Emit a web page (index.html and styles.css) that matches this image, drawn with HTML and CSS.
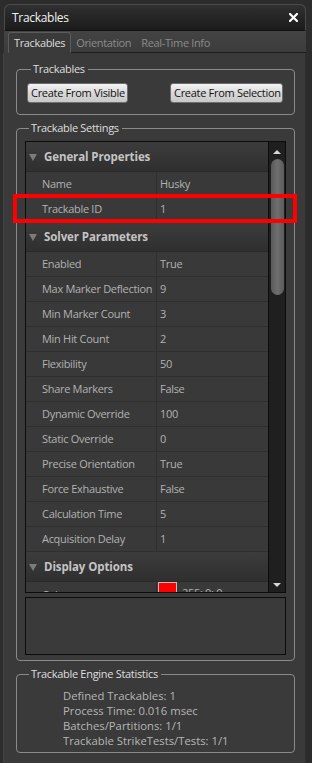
FILE: index.html
```html
<!DOCTYPE html>
<html>
<head>
<meta charset="utf-8">
<link rel="stylesheet" href="styles.css">
</head>
<body>
<div class="window">
  <div class="titlebar">
    <span class="title">Trackables</span>
    <svg class="close" width="9" height="9" viewBox="0 0 9 9"><path d="M1 1L8 8M8 1L1 8" stroke="#fff" stroke-width="2.2" stroke-linecap="square"/></svg>
  </div>
  <div class="tabs">
    <div class="tab active">Trackables</div>
    <div class="tab">Orientation</div>
    <div class="tab">Real-Time Info</div>
    <div class="tabfill"></div>
  </div>
  <div class="content">
    <fieldset class="group g-track">
      <legend>Trackables</legend>
      <div class="btnrow">
        <button class="btn">Create From Visible</button>
        <button class="btn">Create From Selection</button>
      </div>
    </fieldset>
    <fieldset class="group g-settings">
      <legend>Trackable Settings</legend>
      <div class="grid">
        <div class="list">
          <div class="cat"><span class="tri"></span>General Properties</div>
          <div class="prop"><span class="k">Name</span><span class="v">Husky</span></div>
          <div class="prop"><span class="k">Trackable ID</span><span class="v">1</span></div>
          <div class="cat"><span class="tri"></span>Solver Parameters</div>
          <div class="prop"><span class="k">Enabled</span><span class="v">True</span></div>
          <div class="prop"><span class="k">Max Marker Deflection</span><span class="v">9</span></div>
          <div class="prop"><span class="k">Min Marker Count</span><span class="v">3</span></div>
          <div class="prop"><span class="k">Min Hit Count</span><span class="v">2</span></div>
          <div class="prop"><span class="k">Flexibility</span><span class="v">50</span></div>
          <div class="prop"><span class="k">Share Markers</span><span class="v">False</span></div>
          <div class="prop"><span class="k">Dynamic Override</span><span class="v">100</span></div>
          <div class="prop"><span class="k">Static Override</span><span class="v">0</span></div>
          <div class="prop"><span class="k">Precise Orientation</span><span class="v">True</span></div>
          <div class="prop"><span class="k">Force Exhaustive</span><span class="v">False</span></div>
          <div class="prop"><span class="k">Calculation Time</span><span class="v">5</span></div>
          <div class="prop"><span class="k">Acquisition Delay</span><span class="v">1</span></div>
          <div class="cat"><span class="tri"></span>Display Options</div>
          <div class="prop color"><span class="k">Color</span><span class="v"><span class="swatch"></span>255; 0; 0</span></div>
        </div>
        <div class="scroll">
          <div class="arrow up"></div>
          <div class="track"><div class="thumb"></div></div>
          <div class="arrow down"></div>
        </div>
      </div>
      <div class="desc"></div>
    </fieldset>
    <fieldset class="group g-stats">
      <legend>Trackable Engine Statistics</legend>
      <div class="stats">
        <div class="stat">Defined Trackables: 1</div>
        <div class="stat">Process Time: 0.016 msec</div>
        <div class="stat">Batches/Partitions: 1/1</div>
        <div class="stat">Trackable StrikeTests/Tests: 1/1</div>
      </div>
    </fieldset>
  </div>
  <div class="highlight"></div>
</div>
</body>
</html>
```
FILE: styles.css
```css
html, body {
  margin: 0;
  padding: 0;
}
body {
  background: #2c2c2c;
  font-family: "Open Sans", "Liberation Sans", sans-serif;
  height: 763px;
  overflow: hidden;
}
.window {
  margin: 4px 6px 0 4px;
  height: 759px;
  background: #3a3a3a;
  border-radius: 6px 6px 0 0;
  position: relative;
  display: flex;
  flex-direction: column;
}
.titlebar {
  height: 27px;
  box-sizing: border-box;
  border: 1px solid #4a4a4a;
  border-bottom: 1px solid #111;
  border-radius: 6px 6px 0 0;
  background: linear-gradient(#303030, #1b1b1b);
  display: flex;
  align-items: center;
  justify-content: space-between;
  padding: 0 7px 0 7px;
}
.title {
  color: #f2f2f2;
  font-size: 12px;
  letter-spacing: -0.3px;
  line-height: 14px;
  margin-top: 1px;
}
.close {
  display: block;
  margin-top: -1px;
}
.tabs {
  height: 22px;
  display: flex;
  align-items: flex-end;
  background: linear-gradient(#434343, #3c3c3c);
  padding-left: 4px;
}
.tab {
  font-size: 11px;
  letter-spacing: -0.35px;
  color: #8c8c8c;
  line-height: 19px;
  padding: 0 5px;
  border-bottom: 1px solid #1c1c1c;
}
.tab.active {
  color: #dcdcdc;
  background: #3a3a3a;
  border: 1px solid #5c5c5c;
  border-bottom: 1px solid #3a3a3a;
  border-radius: 3px 3px 0 0;
  padding: 0 5px 0 5px;
}
.tabfill {
  flex: 1;
  height: 0;
  border-bottom: 1px solid #1c1c1c;
}
.content {
  flex: 1;
  padding: 0 10px 0 12px;
  border-left: 1px solid #444;
  border-right: 1px solid #303030;
  margin-left: -1px;
}
.group {
  margin: 6px 0 0 0;
  border: 1px solid #8a8a8a;
  border-radius: 4px;
  padding: 0;
  min-width: 0;
}
.group legend {
  color: #dedede;
  font-size: 11px;
  letter-spacing: -0.3px;
  line-height: 14px;
  padding: 0 3px 0 2px;
  margin-left: 4px;
}
.g-track {
  margin-top: 9px;
  padding: 7px 10px 11px 10px;
}
.btnrow {
  display: flex;
  justify-content: space-between;
}
.btn {
  font-family: "Open Sans", "Liberation Sans", sans-serif;
  font-size: 11px;
  letter-spacing: -0.3px;
  white-space: nowrap;
  height: 20px;
  padding: 0 3px;
  color: #111;
  background: linear-gradient(#f4f4f4, #d8d8d8 50%, #c9c9c9);
  border: 1px solid #6e6e6e;
  border-radius: 3px;
  line-height: 18px;
}
.g-track .btn:first-child { width: 101px; }
.g-track .btn:last-child { width: 113px; margin-right: 1px; }
.g-settings {
  padding: 6px 8px 5px 8px;
}
.grid {
  height: 452px;
  box-sizing: border-box;
  border: 1px solid #0c0c0c;
  display: flex;
  background: #393939;
}
.list {
  flex: 1;
  overflow: hidden;
}
.cat {
  height: 30px;
  box-sizing: border-box;
  display: flex;
  align-items: center;
  font-size: 11.5px;
  font-weight: bold;
  letter-spacing: -0.1px;
  color: #c4c4c4;
  background: linear-gradient(#3c3c3c, #2f2f2f);
  border-bottom: 1px solid #2a2a2a;
  padding-left: 3px;
}
.tri {
  width: 0;
  height: 0;
  border-left: 4px solid transparent;
  border-right: 4px solid transparent;
  border-top: 7px solid #7c7c7c;
  margin-right: 7px;
  margin-top: 1px;
}
.prop {
  height: 25px;
  box-sizing: border-box;
  display: flex;
  border-bottom: 1px solid #2f2f2f;
  font-size: 11px;
  letter-spacing: -0.3px;
  color: #b2b2b2;
  line-height: 24px;
}
.k {
  width: 131px;
  box-sizing: border-box;
  padding-left: 16px;
  border-right: 1px solid #2f2f2f;
  white-space: nowrap;
}
.v {
  padding-left: 3px;
  display: flex;
  align-items: flex-start;
  white-space: nowrap;
}
.color {
  line-height: 22px;
}
.color .k {
  line-height: 26px;
}
.swatch {
  display: inline-block;
  width: 17px;
  height: 17px;
  background: #ff0000;
  border: 1px solid #bdbdbd;
  margin: 0 5px 0 -2px;
}
.scroll {
  width: 16px;
  border-left: 1px solid #0c0c0c;
  background: #1f1f1f;
  display: flex;
  flex-direction: column;
  align-items: center;
}
.arrow {
  width: 0;
  height: 0;
  border-left: 4px solid transparent;
  border-right: 4px solid transparent;
}
.arrow.up {
  border-bottom: 4px solid #d8d8d8;
  margin-top: 8px;
}
.arrow.down {
  border-top: 4px solid #d8d8d8;
  margin-bottom: 5px;
}
.track {
  flex: 1;
  width: 100%;
  display: flex;
  justify-content: center;
}
.thumb {
  width: 13px;
  height: 136px;
  margin-top: 5px;
  border-radius: 7px;
  background: linear-gradient(90deg, #5a5a5a, #6e6e6e 50%, #5a5a5a);
}
.desc {
  margin-top: 4px;
  height: 58px;
  box-sizing: border-box;
  border: 1px solid #0c0c0c;
  background: #3a3a3a;
}
.g-stats {
  padding: 7px 8px 4px 8px;
}
.stats {
  padding-left: 38px;
}
.stat {
  font-size: 11.3px;
  letter-spacing: 0;
  line-height: 15px;
  color: #b6b6b6;
  white-space: nowrap;
}
.highlight {
  position: absolute;
  left: 9px;
  top: 190px;
  width: 284px;
  height: 29px;
  box-sizing: border-box;
  border: 4px solid #ff0000;
}
```
